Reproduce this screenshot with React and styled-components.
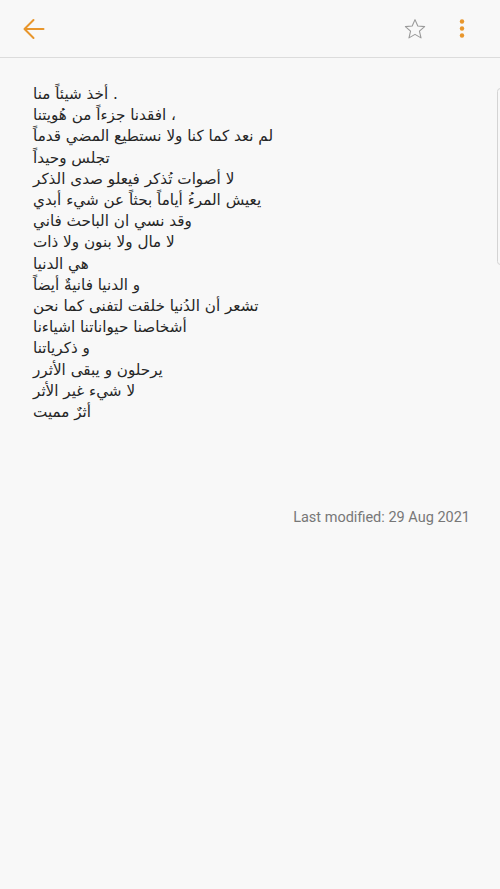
import React from "react"
import styled, { createGlobalStyle } from "styled-components"

const GlobalStyle = createGlobalStyle`
	html, body {
		margin: 0;
		padding: 0;
		background: #f8f8f8;
	}
`

const ORANGE = "#e8962c"

const lines = [
	". أخذ شيئاً منا",
	"، افقدنا جزءاً من هُويتنا",
	"لم نعد كما كنا ولا نستطيع المضي قدماً",
	"تجلس وحيداً",
	"لا أصوات تُذكر فيعلو صدى الذكر",
	"يعيش المرءُ أياماً بحثاً عن شيء أبدي",
	"وقد نسي ان الباحث فاني",
	"لا مال ولا بنون ولا ذات",
	"هي الدنيا",
	"و الدنيا فانيةٌ أيضاً",
	"تشعر أن الدُنيا خلقت لتفنى كما نحن",
	"أشخاصنا حيواناتنا اشياءنا",
	"و ذكرياتنا",
	"يرحلون و يبقى الأثرر",
	"لا شيء غير الأثر",
	"أثرٌ مميت",
]

const PageElement = styled.div`
	position: relative;
	width: 500px;
	height: 889px;
	background: #f8f8f8;
	overflow: hidden;
`

const ToolbarElement = styled.div`
	height: 58px;
	display: flex;
	flex-direction: row;
	align-items: center;
	padding: 0 34px 0 22px;
	border-bottom: 1px solid #dcdcdc;
	box-sizing: border-box;
`

const IconButtonElement = styled.div`
	display: flex;
	align-items: center;
	justify-content: center;
	width: ${(props) => props.size}px;
	height: 24px;
	margin-left: ${(props) => props.gap || 0}px;
`

const SpacerElement = styled.div`
	flex: 1;
`

const BodyElement = styled.div`
	padding: 26px 33px 0 33px;
	display: flex;
	flex-direction: column;
`

const LineElement = styled.div`
	direction: ltr;
	unicode-bidi: plaintext;
	text-align: left;
	font-family: "DejaVu Sans", sans-serif;
	font-size: 15.2px;
	line-height: 21.2px;
	color: #262626;
`

const FooterElement = styled.div`
	margin-top: 86px;
	padding-right: 30px;
	text-align: right;
	font-family: Roboto, "Liberation Sans", sans-serif;
	font-size: 14.5px;
	color: #777777;
`

const ScrollIndicatorElement = styled.div`
	position: absolute;
	top: 88px;
	right: -4px;
	width: 7px;
	height: 177px;
	border: 1px solid #d4d4d4;
	border-radius: 5px;
	box-sizing: border-box;
`

function BackIcon() {
	return (
		<svg width="22" height="22" viewBox="0 0 22 22" fill="none" stroke={ORANGE} strokeWidth="2" strokeLinecap="round" strokeLinejoin="round">
			<path d="M20.5 11H2" />
			<path d="M10.5 2L1.5 11L10.5 20" />
		</svg>
	)
}

function StarIcon() {
	return (
		<svg width="22" height="22" viewBox="0 0 24 24" fill="none" stroke="#9a9a9a" strokeWidth="1.2" strokeLinejoin="round">
			<path d="M12 1.8l3.05 6.9 7.45.7-5.65 4.95 1.7 7.35L12 17.85l-6.55 3.85 1.7-7.35L1.5 9.4l7.45-.7z" />
		</svg>
	)
}

function MoreIcon() {
	return (
		<svg width="6" height="22" viewBox="0 0 6 22" fill={ORANGE}>
			<circle cx="3" cy="3.5" r="2.2" />
			<circle cx="3" cy="10.5" r="2.2" />
			<circle cx="3" cy="17.5" r="2.2" />
		</svg>
	)
}

export default function App() {
	return (
		<PageElement>
			<GlobalStyle />
			<ToolbarElement>
				<IconButtonElement size={24}>
					<BackIcon />
				</IconButtonElement>
				<SpacerElement />
				<IconButtonElement size={24}>
					<StarIcon />
				</IconButtonElement>
				<IconButtonElement size={8} gap={31}>
					<MoreIcon />
				</IconButtonElement>
			</ToolbarElement>
			<BodyElement>
				{lines.map((line, i) => (
					<LineElement key={i}>{line}</LineElement>
				))}
			</BodyElement>
			<FooterElement>Last modified: 29 Aug 2021</FooterElement>
			<ScrollIndicatorElement />
		</PageElement>
	)
}
